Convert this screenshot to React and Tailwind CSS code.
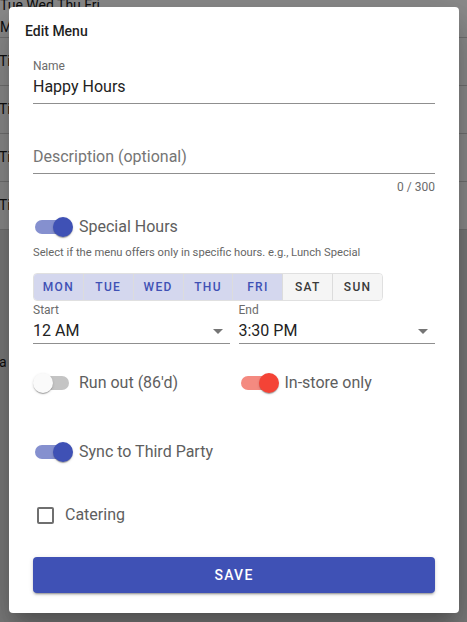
const days = [
  { d: "MON", on: true },
  { d: "TUE", on: true },
  { d: "WED", on: true },
  { d: "THU", on: true },
  { d: "FRI", on: true },
  { d: "SAT", on: false },
  { d: "SUN", on: false },
];

function Toggle({ variant }) {
  // off | blue | red
  const track =
    variant === "blue" ? "bg-[#8590cf]" : variant === "red" ? "bg-[#f48a80]" : "bg-[#c4c4c4]";
  const thumb =
    variant === "blue"
      ? "left-[20px] bg-[#3f51b5]"
      : variant === "red"
      ? "left-[20px] bg-[#f44336]"
      : "left-0 bg-[#fafafa]";
  return (
    <span className="relative block w-[40px] h-5 shrink-0">
      <span className={`absolute left-[2px] top-[3px] w-[34px] h-[14px] rounded-full ${track}`} />
      <span
        className={`absolute top-0 w-5 h-5 rounded-full shadow-[0_2px_1px_-1px_rgba(0,0,0,0.2),0_1px_1px_0_rgba(0,0,0,0.14),0_1px_3px_0_rgba(0,0,0,0.12)] ${thumb}`}
      />
    </span>
  );
}

function SelectField({ label, value }) {
  return (
    <div>
      <div className="text-[12px] leading-4 text-[#6b6b6b]">{label}</div>
      <div className="flex items-center justify-between pt-[3px] pb-[2px] border-b border-[#8f8f8f]">
        <span className="text-[16px] leading-5 text-[#222]">{value}</span>
        <svg width="10" height="5" viewBox="0 0 10 5" className="mr-[7px]">
          <path d="M0 0 L5 5 L10 0 Z" fill="#757575" />
        </svg>
      </div>
    </div>
  );
}

export default function App() {
  return (
    <div className="relative h-[622px] w-[467px] overflow-hidden bg-[#e0e0e0] font-['Roboto',sans-serif]">

      {/* page behind the dialog */}
      <div className="bg-white">
        <div className="h-[40px] border-b border-[#d0d0d0] text-[14px] text-[#1a1a1a]">
          <div className="leading-[14px] -mt-[2px]">Tue Wed Thu Fri</div>
          <div className="leading-4 mt-[7px]">Mon</div>
        </div>
        {[0, 1, 2, 3].map((i) => (
          <div key={i} className="h-[48px] border-b border-[#d0d0d0] flex items-center text-[14px] text-[#1a1a1a]">
            <span className="-ml-[1px]">Time</span>
          </div>
        ))}
      </div>
      <div className="text-[14px] text-[#1a1a1a] mt-[122px] -ml-[1px]">a</div>

      {/* backdrop */}
      <div className="absolute inset-0 bg-black/45" />

      {/* dialog */}
      <div className="absolute left-[9px] top-[7px] w-[450px] rounded-[4px] bg-white pt-[14px] pb-[20px] shadow-[0_11px_15px_-7px_rgba(0,0,0,0.2),0_24px_38px_3px_rgba(0,0,0,0.14),0_9px_46px_8px_rgba(0,0,0,0.12)]">
        <div className="pl-4 text-[14px] leading-5 font-medium text-[#1f1f1f]">Edit Menu</div>

        <div className="px-6 mt-[17px]">
          {/* name */}
          <div className="text-[12px] leading-4 text-[#6b6b6b]">Name</div>
          <div className="pt-[3px] pb-[6px] text-[16px] leading-5 text-[#222] border-b border-[#8f8f8f]">
            Happy Hours
          </div>

          {/* description */}
          <div className="mt-[40px] pt-[3px] pb-[6px] text-[16px] leading-5 text-[#757575] border-b border-[#8f8f8f]">
            Description (optional)
          </div>
          <div className="mt-[5px] text-right text-[12px] leading-4 text-[#6b6b6b]">0 / 300</div>

          {/* special hours */}
          <div className="mt-[20px] flex items-center gap-[6px] h-6">
            <Toggle variant="blue" />
            <span className="text-[16px] text-[#5e5e5e]">Special Hours</span>
          </div>
          <div className="mt-[6px] text-[11.2px] leading-4 text-[#666]">
            Select if the menu offers only in specific hours. e.g., Lunch Special
          </div>

          <div className="mt-[12px] flex w-[350px] h-[28px] rounded-[4px] overflow-hidden border border-[#e0e0e0]">
            {days.map((x, i) => (
              <div
                key={x.d}
                className={`flex-1 flex items-center justify-center text-[12px] font-medium tracking-[1.3px] ${
                  i > 0 ? "border-l border-[#dcdcdc]" : ""
                } ${x.on ? "bg-[#d4d7ee] text-[#3f51b5]" : "bg-[#f5f5f5] text-[#3a3a3a]"}`}
              >
                {x.d}
              </div>
            ))}
          </div>

          {/* start / end */}
          <div className="grid grid-cols-2 gap-x-[9px] mt-[1px]">
            <SelectField label="Start" value="12 AM" />
            <SelectField label="End" value="3:30 PM" />
          </div>

          {/* run out / in-store */}
          <div className="grid grid-cols-2 gap-x-[9px] mt-[27px]">
            <div className="flex items-center gap-[6px] h-6">
              <Toggle variant="off" />
              <span className="text-[16px] text-[#5e5e5e]">Run out (86'd)</span>
            </div>
            <div className="flex items-center gap-[6px] h-6">
              <Toggle variant="red" />
              <span className="text-[16px] text-[#5e5e5e]">In-store only</span>
            </div>
          </div>

          {/* sync */}
          <div className="mt-[45px] flex items-center gap-[6px] h-6">
            <Toggle variant="blue" />
            <span className="text-[16px] text-[#5e5e5e]">Sync to Third Party</span>
          </div>

          {/* catering */}
          <div className="mt-[39px] flex items-center h-6">
            <span className="w-6 h-6 flex items-center justify-center">
              <span className="block w-[17px] h-[17px] rounded-[2px] border-2 border-[#6f6f6f]" />
            </span>
            <span className="ml-[8px] text-[16px] text-[#5e5e5e]">Catering</span>
          </div>

          {/* save */}
          <button className="mt-[30px] w-full h-9 rounded-[4px] bg-[#3f51b5] text-white text-[14px] font-medium tracking-[1.25px] shadow-[0_3px_1px_-2px_rgba(0,0,0,0.2),0_2px_2px_0_rgba(0,0,0,0.14),0_1px_5px_0_rgba(0,0,0,0.12)]">
            SAVE
          </button>
        </div>
      </div>
    </div>
  );
}
